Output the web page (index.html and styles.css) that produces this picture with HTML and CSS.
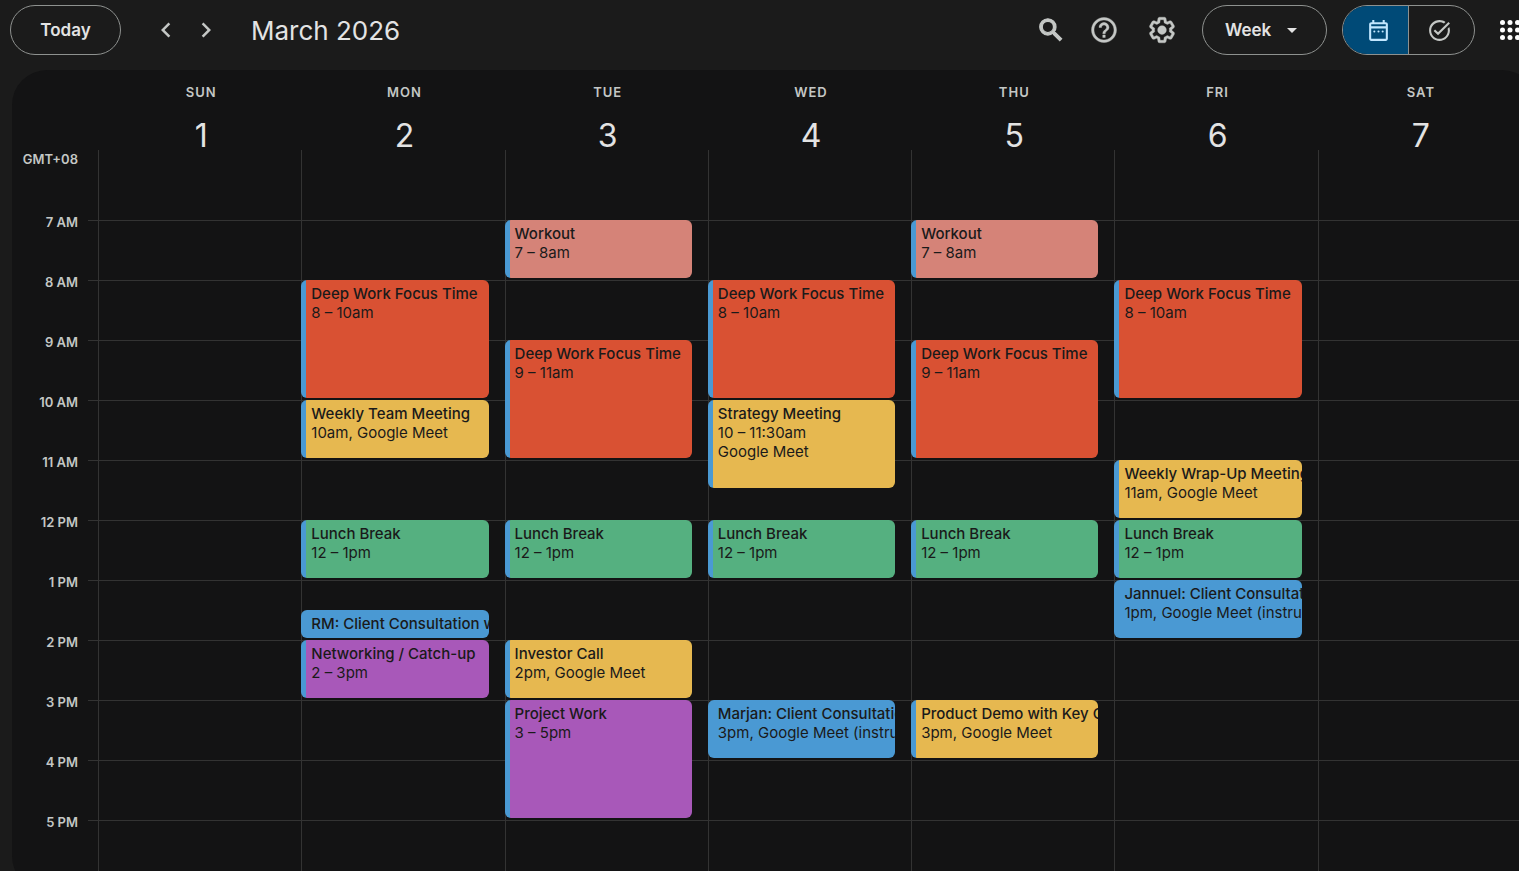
FILE: index.html
```html
<!DOCTYPE html>
<html lang="en">
<head>
  <meta charset="UTF-8">
  <meta name="viewport" content="width=device-width, initial-scale=1.0">
  <title>Calendar - March 2026</title>
  <link rel="stylesheet" href="styles.css">
</head>
<body>
  <header class="topbar">
    <button class="pill today">Today</button>
    <div class="arrows">
      <button class="icon-btn" aria-label="Previous week">
        <svg viewBox="0 0 24 24"><path d="M15.41 7.41L14 6l-6 6 6 6 1.41-1.41L10.83 12z"/></svg>
      </button>
      <button class="icon-btn" aria-label="Next week">
        <svg viewBox="0 0 24 24"><path d="M10 6L8.59 7.41 13.17 12l-4.58 4.59L10 18l6-6z"/></svg>
      </button>
    </div>
    <h1>March 2026</h1>

    <div class="tools">
      <button class="icon-btn search" aria-label="Search">
        <svg viewBox="0 0 24 24"><path d="M15.5 14h-.79l-.28-.27C15.41 12.59 16 11.11 16 9.5 16 5.91 13.09 3 9.5 3S3 5.91 3 9.5 5.91 16 9.5 16c1.61 0 3.09-.59 4.23-1.57l.27.28v.79l5 4.99L20.49 19l-4.99-5zm-6 0C7.01 14 5 11.99 5 9.5S7.01 5 9.5 5 14 7.01 14 9.5 11.99 14 9.5 14z"/></svg>
      </button>
      <button class="icon-btn" aria-label="Support">
        <svg viewBox="0 0 24 24"><path d="M11 18h2v-2h-2v2zm1-16C6.48 2 2 6.48 2 12s4.48 10 10 10 10-4.48 10-10S17.52 2 12 2zm0 18c-4.41 0-8-3.59-8-8s3.59-8 8-8 8 3.59 8 8-3.59 8-8 8zm0-14c-2.21 0-4 1.79-4 4h2c0-1.1.9-2 2-2s2 .9 2 2c0 2-3 1.75-3 5h2c0-2.25 3-2.5 3-5 0-2.21-1.79-4-4-4z"/></svg>
      </button>
      <button class="icon-btn" aria-label="Settings">
        <svg viewBox="0 0 24 24"><path d="M13.85 22.25h-3.7c-.74 0-1.36-.54-1.45-1.27l-.27-1.89c-.27-.14-.53-.29-.79-.46l-1.8.72c-.7.26-1.47-.03-1.81-.65L2.2 15.53c-.35-.66-.2-1.44.36-1.88l1.53-1.19c-.01-.15-.02-.3-.02-.46 0-.15.01-.31.02-.46l-1.52-1.19c-.59-.45-.74-1.26-.37-1.88l1.85-3.19c.34-.62 1.11-.9 1.79-.63l1.81.73c.26-.17.52-.32.78-.46l.27-1.91c.09-.7.71-1.25 1.44-1.25h3.7c.74 0 1.36.54 1.45 1.27l.27 1.89c.27.14.53.29.79.46l1.8-.72c.71-.26 1.48.03 1.82.65l1.84 3.18c.36.66.2 1.44-.36 1.88l-1.52 1.19c.01.15.02.3.02.46s-.01.31-.02.46l1.52 1.19c.56.45.72 1.23.37 1.86l-1.86 3.22c-.34.62-1.11.9-1.8.63l-1.8-.72c-.26.17-.52.32-.78.46l-.27 1.91c-.1.68-.72 1.22-1.46 1.22zm-3.23-2h2.76l.37-2.55.53-.22c.44-.18.88-.44 1.34-.78l.45-.34 2.38.96 1.38-2.4-2.03-1.58.07-.56c.03-.26.06-.51.06-.78s-.03-.53-.06-.78l-.07-.56 2.03-1.58-1.39-2.4-2.39.96-.45-.35c-.42-.32-.87-.58-1.33-.77l-.52-.22-.37-2.55h-2.76l-.37 2.55-.53.21c-.44.19-.88.44-1.34.79l-.45.33-2.38-.95-1.39 2.39 2.03 1.58-.07.56c-.03.26-.06.53-.06.79s.02.53.06.78l.07.56-2.03 1.58 1.38 2.4 2.39-.96.45.35c.43.33.86.58 1.33.77l.53.22.38 2.55z"/><circle cx="12" cy="12" r="3.5"/></svg>
      </button>
    </div>

    <div class="pill view">
      <select aria-label="View">
        <option>Day</option>
        <option selected>Week</option>
        <option>Month</option>
      </select>
      <svg viewBox="0 0 24 24"><path d="M7 10l5 5 5-5z"/></svg>
    </div>

    <div class="pill switch">
      <button class="active" aria-label="Calendar">
        <svg viewBox="0 0 24 24"><path d="M19 4h-1V2h-2v2H8V2H6v2H5c-1.11 0-1.99.9-1.99 2L3 20c0 1.1.89 2 2 2h14c1.1 0 2-.9 2-2V6c0-1.1-.9-2-2-2zm0 16H5V10h14v10zm0-12H5V6h14v2z"/><circle cx="8" cy="13" r="1"/><circle cx="12" cy="13" r="1"/><circle cx="16" cy="13" r="1"/></svg>
      </button>
      <button aria-label="Tasks">
        <svg viewBox="0 0 24 24"><path d="M22 5.18L10.59 16.6l-4.24-4.24 1.41-1.41 2.83 2.83 10-10L22 5.18zm-2.21 5.04c.13.57.21 1.17.21 1.78 0 4.42-3.58 8-8 8s-8-3.58-8-8 3.58-8 8-8c1.58 0 3.04.46 4.28 1.25l1.44-1.44C16.1 2.67 14.13 2 12 2 6.48 2 2 6.48 2 12s4.48 10 10 10 10-4.48 10-10c0-1.19-.22-2.33-.6-3.39l-1.61 1.61z"/></svg>
      </button>
    </div>

    <button class="icon-btn apps" aria-label="Google apps">
      <svg viewBox="0 0 24 24"><circle cx="6" cy="6" r="2"/><circle cx="12" cy="6" r="2"/><circle cx="18" cy="6" r="2"/><circle cx="6" cy="12" r="2"/><circle cx="12" cy="12" r="2"/><circle cx="18" cy="12" r="2"/><circle cx="6" cy="18" r="2"/><circle cx="12" cy="18" r="2"/><circle cx="18" cy="18" r="2"/></svg>
    </button>
  </header>

  <main class="calendar">
    <div class="week days">
      <div class="zone">GMT+08</div>
      <div class="day"><span>SUN</span><b>1</b></div>
      <div class="day"><span>MON</span><b>2</b></div>
      <div class="day"><span>TUE</span><b>3</b></div>
      <div class="day"><span>WED</span><b>4</b></div>
      <div class="day"><span>THU</span><b>5</b></div>
      <div class="day"><span>FRI</span><b>6</b></div>
      <div class="day"><span>SAT</span><b>7</b></div>
    </div>

    <div class="week hours">
      <div class="times">
        <span>7 AM</span>
        <span>8 AM</span>
        <span>9 AM</span>
        <span>10 AM</span>
        <span>11 AM</span>
        <span>12 PM</span>
        <span>1 PM</span>
        <span>2 PM</span>
        <span>3 PM</span>
        <span>4 PM</span>
        <span>5 PM</span>
      </div>

      <!-- row 2 is 7 AM, one row per half hour -->
      <div class="column"></div>

      <div class="column">
        <button class="event red" style="grid-row: 4 / span 4"><strong>Deep Work Focus Time</strong><span>8 – 10am</span></button>
        <button class="event yellow" style="grid-row: 8 / span 2"><strong>Weekly Team Meeting</strong><span>10am, Google Meet</span></button>
        <button class="event green" style="grid-row: 12 / span 2"><strong>Lunch Break</strong><span>12 – 1pm</span></button>
        <button class="event blue" style="grid-row: 15 / span 1"><strong>RM: Client Consultation with</strong></button>
        <button class="event purple" style="grid-row: 16 / span 2"><strong>Networking / Catch-up</strong><span>2 – 3pm</span></button>
      </div>

      <div class="column">
        <button class="event pink" style="grid-row: 2 / span 2"><strong>Workout</strong><span>7 – 8am</span></button>
        <button class="event red" style="grid-row: 6 / span 4"><strong>Deep Work Focus Time</strong><span>9 – 11am</span></button>
        <button class="event green" style="grid-row: 12 / span 2"><strong>Lunch Break</strong><span>12 – 1pm</span></button>
        <button class="event yellow" style="grid-row: 16 / span 2"><strong>Investor Call</strong><span>2pm, Google Meet</span></button>
        <button class="event purple" style="grid-row: 18 / span 4"><strong>Project Work</strong><span>3 – 5pm</span></button>
      </div>

      <div class="column">
        <button class="event red" style="grid-row: 4 / span 4"><strong>Deep Work Focus Time</strong><span>8 – 10am</span></button>
        <button class="event yellow" style="grid-row: 8 / span 3"><strong>Strategy Meeting</strong><span>10 – 11:30am</span><span>Google Meet</span></button>
        <button class="event green" style="grid-row: 12 / span 2"><strong>Lunch Break</strong><span>12 – 1pm</span></button>
        <button class="event blue" style="grid-row: 18 / span 2"><strong>Marjan: Client Consultation</strong><span>3pm, Google Meet (instruc</span></button>
      </div>

      <div class="column">
        <button class="event pink" style="grid-row: 2 / span 2"><strong>Workout</strong><span>7 – 8am</span></button>
        <button class="event red" style="grid-row: 6 / span 4"><strong>Deep Work Focus Time</strong><span>9 – 11am</span></button>
        <button class="event green" style="grid-row: 12 / span 2"><strong>Lunch Break</strong><span>12 – 1pm</span></button>
        <button class="event yellow" style="grid-row: 18 / span 2"><strong>Product Demo with Key Client</strong><span>3pm, Google Meet</span></button>
      </div>

      <div class="column">
        <button class="event red" style="grid-row: 4 / span 4"><strong>Deep Work Focus Time</strong><span>8 – 10am</span></button>
        <button class="event yellow" style="grid-row: 10 / span 2"><strong>Weekly Wrap-Up Meeting</strong><span>11am, Google Meet</span></button>
        <button class="event green" style="grid-row: 12 / span 2"><strong>Lunch Break</strong><span>12 – 1pm</span></button>
        <button class="event blue" style="grid-row: 14 / span 2"><strong>Jannuel: Client Consultation</strong><span>1pm, Google Meet (instruc</span></button>
      </div>

      <div class="column"></div>
    </div>
  </main>
</body>
</html>
```
FILE: styles.css
```css
* {
  box-sizing: border-box;
}

body {
  margin: 0;
  height: 100vh;
  display: flex;
  flex-direction: column;
  overflow: hidden;
  background: #1b1b1b;
  color: #e3e3e3;
  font-family: "Google Sans", Inter, Roboto, sans-serif;
}

button,
select {
  padding: 0;
  border: none;
  background: none;
  color: inherit;
  font: inherit;
  cursor: pointer;
}

svg {
  display: block;
  width: 30px;
  height: 30px;
  fill: #c4c7c5;
}

/* top bar */
.topbar {
  display: flex;
  flex: none;
  align-items: center;
  height: 70px;
  padding: 0 0 10px 10px;
  margin-right: -11px;
}

.pill {
  height: 50px;
  border: 1px solid #8e918f;
  border-radius: 25px;
  font-size: 17px;
  font-weight: 600;
}

.today {
  width: 111px;
}

.icon-btn {
  display: flex;
  align-items: center;
  justify-content: center;
  width: 40px;
  height: 40px;
}

.arrows {
  display: flex;
  margin-left: 25px;
}

h1 {
  margin: 0 0 0 25px;
  font-size: 26px;
  font-weight: 400;
}

.tools {
  display: flex;
  gap: 18px;
  margin-left: auto;
}

.tools svg {
  stroke: #c4c7c5;
  stroke-width: 0.3;
}

.tools .search {
  justify-content: flex-end;
}

.tools .search svg {
  stroke-width: 1;
}

.view {
  display: flex;
  align-items: center;
  width: 125px;
  margin: 0 15px 0 20px;
  position: relative;
}

.view select {
  width: 100%;
  height: 100%;
  padding: 0 0 0 22px;
  border-radius: 25px;
  appearance: none;
}

.view svg {
  position: absolute;
  right: 22px;
  width: 24px;
  height: 24px;
  fill: #e3e3e3;
  pointer-events: none;
}

.switch {
  display: flex;
  width: 133px;
  overflow: hidden;
}

.switch button {
  display: flex;
  flex: 1;
  align-items: center;
  justify-content: center;
  padding-right: 5px;
}

.switch svg {
  width: 25px;
  height: 25px;
}

.switch .active {
  padding: 0 0 0 5px;
  background: #004a77;
  border-right: 1px solid #8e918f;
}

.switch .active svg {
  fill: #c2e7ff;
}

.apps {
  margin-left: 15px;
}

.apps svg {
  fill: #fff;
}

/* week grid */
.calendar {
  flex: 1;
  margin: 0 -18px -20px 12px;
  border-radius: 35px;
  overflow: hidden;
  background: #131314;
}

.week {
  display: grid;
  grid-template-columns: 86px repeat(7, 1fr);
  padding-right: 16px;
}

.days {
  height: 105px;
}

.zone {
  align-self: end;
  padding: 0 20px 8px 0;
  color: #c4c7c5;
  font-size: 13px;
  font-weight: 600;
  line-height: 16px;
  text-align: right;
}

.day {
  display: flex;
  flex-direction: column;
  align-items: center;
  padding: 14px 0 0 3px;
  background: linear-gradient(#333, #333) 0 100% / 1px 25px no-repeat;
}

.day span {
  color: #c4c7c5;
  font-size: 13px;
  font-weight: 600;
  line-height: 16px;
  letter-spacing: 1px;
}

.day b {
  margin-top: 16px;
  font-size: 32px;
  font-weight: 400;
  line-height: 40px;
}

.hours {
  background: linear-gradient(#333, #333 1px, transparent 1px) 76px 45px / 100% 60px repeat-y;
}

.times {
  display: flex;
  flex-direction: column;
  padding: 39px 20px 0 0;
  color: #c4c7c5;
  font-size: 13px;
  font-weight: 600;
  text-align: right;
}

.times span {
  height: 60px;
  line-height: 16px;
}

.column {
  display: grid;
  grid-template-rows: 45px repeat(22, 30px);
  min-width: 0;
  padding-right: 16px;
  background: linear-gradient(#333, #333) 0 0 / 1px 100% no-repeat;
}

.event {
  display: flex;
  flex-direction: column;
  align-items: flex-start;
  min-width: 0;
  margin-bottom: 2px;
  padding: 4px 0 0 10px;
  border-radius: 6px;
  overflow: hidden;
  background-image: linear-gradient(#4a99d3, #4a99d3);
  background-size: 5px 100%;
  background-repeat: no-repeat;
  color: #1a1a1a;
  font-size: 15px;
  line-height: 19px;
  white-space: nowrap;
}

.event strong {
  font-weight: 500;
}

.red {
  background-color: #d95133;
}

.yellow {
  background-color: #e6b850;
}

.green {
  background-color: #55b080;
}

.blue {
  background-color: #4a99d3;
}

.purple {
  background-color: #a858b9;
}

.pink {
  background-color: #d58378;
}
```
